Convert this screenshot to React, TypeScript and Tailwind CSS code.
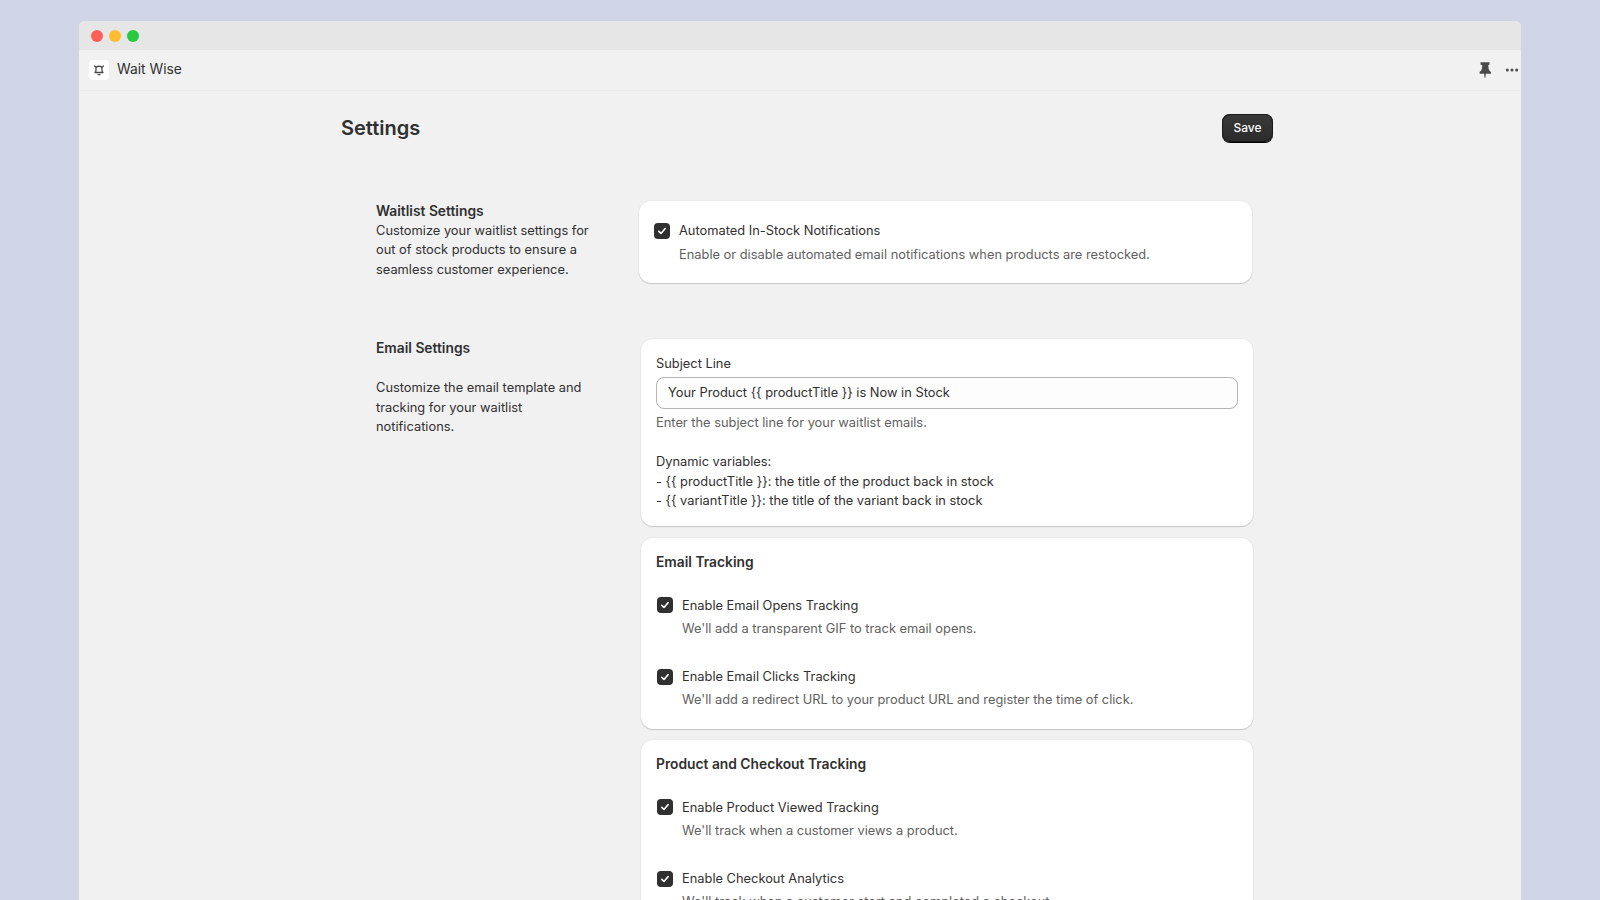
import { Ellipsis } from "lucide-react";

function CheckRow({ label, description, className }: { label: string; description: string; className?: string }) {
    return (
        <div className={className}>
            <div className="flex items-center">
                <span className="flex h-4 w-4 shrink-0 items-center justify-center rounded-[4px] bg-[#303030]">
                    <svg viewBox="0 0 16 16" className="h-4 w-4" fill="none">
                        <path d="M4.8 8.4 7 10.5l4.2-5" stroke="#fff" strokeWidth="1.6" strokeLinecap="round" strokeLinejoin="round" />
                    </svg>
                </span>
                <span className="ml-[9px] text-[#303030]">{label}</span>
            </div>
            <p className="ml-[25px] mt-[4px] text-[#616161]">{description}</p>
        </div>
    );
}

const cardClass =
    "rounded-[12px] bg-white shadow-[0_1px_1px_0_rgba(26,26,26,0.18),0_0_0_1px_rgba(26,26,26,0.03)]";

function App() {
    return (
        <div className="h-screen overflow-hidden bg-[#cfd5e7] pl-[79px] pt-[21px] font-['Inter',sans-serif] text-[12.85px] leading-[19.6px]">
            <div className="h-[879px] w-[1442px] overflow-hidden rounded-t-[6px] bg-[#f1f1f1]">
                {/* TITLE BAR */}
                <div className="flex h-[29px] items-center gap-[6px] bg-[#e6e6e6] pl-[12px]">
                    <span className="h-3 w-3 rounded-full bg-[#ff5f57]"></span>
                    <span className="h-3 w-3 rounded-full bg-[#febc2e]"></span>
                    <span className="h-3 w-3 rounded-full bg-[#28c840]"></span>
                </div>

                {/* APP HEADER */}
                <div className="flex h-[41px] items-center border-b border-[#ebebeb] pb-[1px] pl-[10px] pr-[1px]">
                    <span className="flex h-5 w-5 items-center justify-center rounded-[4px] bg-white">
                        <svg viewBox="0 0 12 12" className="h-[12px] w-[12px]" fill="none" stroke="#4a4a4a" strokeWidth="1.3" strokeLinejoin="round" strokeLinecap="round">
                            <path d="M1.5 2 3 3M10.5 2 9 3" />
                            <path d="M3 3c1.8-.9 4.2-.9 6 0v3.2c0 1.2.4 1.8 1 2.3H2c.6-.5 1-1.1 1-2.3z" />
                            <path d="M5 10.6h2" />
                        </svg>
                    </span>
                    <span className="ml-[8px] text-[13.85px] text-[#303030]">Wait Wise</span>
                    <svg viewBox="0 0 16 16" className="ml-auto h-[18px] w-[18px]" fill="#4a4a4a">
                        <path d="M4 1.2h8v1.9l-1.2.9.7 4 1.8 1.7v1.7H8.7l-.3 3.4h-.8l-.3-3.4H3.2V9.7L5 8l.7-4L4 3.1z" />
                    </svg>
                    <Ellipsis className="ml-[10px] h-[16px] w-[16px] text-[#4a4a4a]" strokeWidth={2.6} />
                </div>

                {/* PAGE */}
                <div className="ml-[262px] w-[932px] pt-[23px]">
                    <div className="flex h-[28px] items-center justify-between">
                        <h1 className="pt-[2px] text-[20px] font-semibold text-[#303030]">Settings</h1>
                        <button className="h-[28px] w-[51px] rounded-[8px] bg-gradient-to-b from-[#3a3a3a] to-[#2a2a2a] text-[12px] font-medium text-white shadow-[0_1px_0_0_#000,inset_0_0_0_1px_#1a1a1a]">
                            Save
                        </button>
                    </div>

                    {/* WAITLIST SETTINGS */}
                    <section className="mt-[59px] flex pl-[35px]">
                        <div className="w-[263px] shrink-0 pr-[40px] text-[#303030]">
                            <h2 className="-mb-[1px] pt-[1px] text-[13.8px] font-semibold">Waitlist Settings</h2>
                            <p>Customize your waitlist settings for out of stock products to ensure a seamless customer experience.</p>
                        </div>
                        <div className={`${cardClass} h-[82px] w-[613px] pl-[15px] pt-[20px]`}>
                            <CheckRow
                                label="Automated In-Stock Notifications"
                                description="Enable or disable automated email notifications when products are restocked."
                            />
                        </div>
                    </section>

                    {/* EMAIL SETTINGS */}
                    <section className="mt-[56px] flex pl-[35px]">
                        <div className="w-[265px] shrink-0 pr-[40px] text-[#303030]">
                            <h2 className="text-[13.8px] font-semibold">Email Settings</h2>
                            <p className="mt-[19.6px]">Customize the email template and tracking for your waitlist notifications.</p>
                        </div>
                        <div className="flex w-[612px] flex-col gap-[12px]">
                            <div className={`${cardClass} h-[187px] pl-[15px] pr-[15px] pt-[15px]`}>
                                <label className="block text-[#303030]">Subject Line</label>
                                <div className="mt-[3px] flex h-[32px] items-center rounded-[8px] border border-[#b5b5b5] bg-[#fdfdfd] pl-[11px] pt-[1px] text-[#303030]">
                                    Your Product {"{{ productTitle }}"} is Now in Stock
                                </div>
                                <p className="mt-[4px] text-[#616161]">Enter the subject line for your waitlist emails.</p>
                                <div className="mt-[20px] text-[#303030]">
                                    <p>Dynamic variables:</p>
                                    <p>- {"{{ productTitle }}"}: the title of the product back in stock</p>
                                    <p>- {"{{ variantTitle }}"}: the title of the variant back in stock</p>
                                </div>
                            </div>

                            <div className={`${cardClass} -mb-[1px] h-[191px] px-[15px] pt-[15px]`}>
                                <h3 className="text-[13.8px] font-semibold text-[#303030]">Email Tracking</h3>
                                <CheckRow
                                    className="ml-[1px] mt-[23px]"
                                    label="Enable Email Opens Tracking"
                                    description="We'll add a transparent GIF to track email opens."
                                />
                                <CheckRow
                                    className="ml-[1px] mt-[28px]"
                                    label="Enable Email Clicks Tracking"
                                    description="We'll add a redirect URL to your product URL and register the time of click."
                                />
                            </div>

                            <div className={`${cardClass} h-[190px] px-[15px] pt-[15px]`}>
                                <h3 className="text-[13.8px] font-semibold text-[#303030]">Product and Checkout Tracking</h3>
                                <CheckRow
                                    className="ml-[1px] mt-[23px]"
                                    label="Enable Product Viewed Tracking"
                                    description="We'll track when a customer views a product."
                                />
                                <CheckRow
                                    className="ml-[1px] mt-[28px]"
                                    label="Enable Checkout Analytics"
                                    description="We'll track when a customer start and completed a checkout."
                                />
                            </div>
                        </div>
                    </section>
                </div>
            </div>
        </div>
    );
}

export default App;
